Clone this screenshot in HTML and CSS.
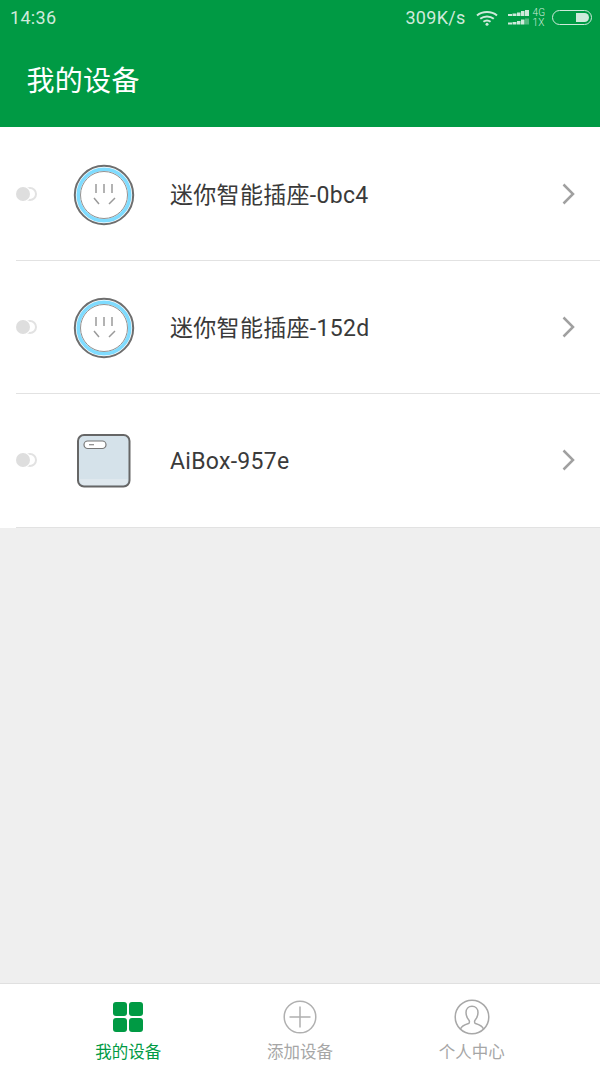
FILE: index.html
```html
<!DOCTYPE html>
<html lang="zh">
<head>
<meta charset="utf-8">
<title>我的设备</title>
<link rel="stylesheet" href="styles.css">
</head>
<body>
<div class="app">
  <header class="top">
    <div class="status">
      <span class="time">14:36</span>
      <div class="status-right">
        <span class="speed">309K/s</span>
        <svg class="wifi" width="22" height="16" viewBox="0 0 22 16" fill="none" stroke="#cfeadb" stroke-width="2"><path d="M1 5.500C6.500.8 15.500.8 21 5.500"/><path d="M4.200 8.800C8 5.600 14 5.600 17.800 8.800"/><path d="M7.400 11.800C9.500 10.200 12.500 10.200 14.600 11.800"/><circle cx="11" cy="14.200" r="1.500" fill="#cfeadb" stroke="none"/></svg>
        <svg class="signal" width="22" height="15" viewBox="0 0 22 15" fill="#cfeadb"><rect x="0" y="4" width="4" height="2"/><rect x="4.500" y="3.500" width="4" height="2.500"/><rect x="9" y="2.500" width="3.500" height="3.500"/><rect x="13" y="1" width="3.500" height="5"/><rect x="17" y="0" width="4" height="6"/><rect x="0" y="12.500" width="4" height="2"/><rect x="4.500" y="12" width="4" height="2.500"/><rect x="9" y="11" width="3.500" height="3.500"/><rect x="13" y="9.500" width="3.500" height="5"/><rect x="17" y="8.500" width="4" height="6" opacity=".4"/></svg>
        <span class="net"><span>4G</span><span>1X</span></span>
        <span class="battery"><span class="battery-fill"></span></span>
      </div>
    </div>
    <h1 class="title">我的设备</h1>
  </header>

  <main class="list">
    <div class="row">
      <span class="dots"><i class="dot-back"></i><i class="dot-front"></i></span>
      <svg class="device" width="62" height="62" viewBox="0 0 62 62" fill="none">
        <circle cx="31" cy="31" r="29.200" stroke="#6e6e6e" stroke-width="2"/>
        <circle cx="31" cy="31" r="25.800" stroke="#7fdcff" stroke-width="3.500"/>
        <circle cx="31" cy="31" r="23.500" fill="#fff" stroke="#929292" stroke-width="1"/>
        <path d="M23 20v9M31 20v9M39 20v9M21 34l5 6M42 34l-6 6" stroke="#9a9a9a" stroke-width="1.500"/>
      </svg>
      <span class="name">迷你智能插座-0bc4</span>
      <svg class="chevron" width="16" height="22" viewBox="0 0 16 22" fill="none" stroke="#a0a0a0" stroke-width="2.500"><path d="M2.500 1.500 12 11l-9.500 9.500"/></svg>
    </div>
    <div class="row">
      <span class="dots"><i class="dot-back"></i><i class="dot-front"></i></span>
      <svg class="device" width="62" height="62" viewBox="0 0 62 62" fill="none">
        <circle cx="31" cy="31" r="29.200" stroke="#6e6e6e" stroke-width="2"/>
        <circle cx="31" cy="31" r="25.800" stroke="#7fdcff" stroke-width="3.500"/>
        <circle cx="31" cy="31" r="23.500" fill="#fff" stroke="#929292" stroke-width="1"/>
        <path d="M23 20v9M31 20v9M39 20v9M21 34l5 6M42 34l-6 6" stroke="#9a9a9a" stroke-width="1.500"/>
      </svg>
      <span class="name">迷你智能插座-152d</span>
      <svg class="chevron" width="16" height="22" viewBox="0 0 16 22" fill="none" stroke="#a0a0a0" stroke-width="2.500"><path d="M2.500 1.500 12 11l-9.500 9.500"/></svg>
    </div>
    <div class="row">
      <span class="dots"><i class="dot-back"></i><i class="dot-front"></i></span>
      <svg class="device" width="62" height="56" viewBox="0 0 62 56" fill="none">
        <rect x="5" y="2" width="51.500" height="51.500" rx="6" fill="#d5e2ea" stroke="#666" stroke-width="2"/>
        <path d="M7 46h47.500v1.500a4.500 4.500 0 0 1-4.500 4.500H11.500a4.500 4.500 0 0 1-4.500-4.500z" fill="#dfe8ee"/>
        <rect x="11" y="8" width="22" height="7.500" rx="3.700" fill="#fff" stroke="#777" stroke-width="1.200"/>
        <path d="M16 11.700h5" stroke="#888" stroke-width="1.200"/>
      </svg>
      <span class="name">AiBox-957e</span>
      <svg class="chevron" width="16" height="22" viewBox="0 0 16 22" fill="none" stroke="#a0a0a0" stroke-width="2.500"><path d="M2.500 1.500 12 11l-9.500 9.500"/></svg>
    </div>
  </main>

  <div class="empty"></div>

  <nav class="tabs">
    <div class="tab tab-active">
      <svg width="32" height="36" viewBox="0 -2 32 36" fill="#009a44"><rect x="1" y="1" width="14" height="14" rx="3"/><rect x="17" y="1" width="14" height="14" rx="3"/><rect x="1" y="17" width="14" height="14" rx="3"/><rect x="17" y="17" width="14" height="14" rx="3"/></svg>
      <span>我的设备</span>
    </div>
    <div class="tab">
      <svg width="34" height="36" viewBox="0 -1 34 36" fill="none" stroke="#b0b0b0" stroke-width="1.500"><circle cx="17" cy="17" r="15.800"/><path d="M17 6.500v21M6.500 17h21"/></svg>
      <span>添加设备</span>
    </div>
    <div class="tab">
      <svg width="36" height="36" viewBox="0 0 36 36" fill="none" stroke="#a8a8a8" stroke-width="1.500"><circle cx="18" cy="18" r="16.800"/><path d="M6.500 30c1-3 4.500-4.500 8-5.500 1.200-.5 1.200-2.500.3-3.500-1.800-2-2.800-4.500-2.800-7.500 0-3.700 2.500-6.300 6-6.300s6 2.600 6 6.300c0 3-1 5.500-2.800 7.500-.9 1-.9 3 .3 3.500 3.500 1 7 2.500 8 5.500"/></svg>
      <span>个人中心</span>
    </div>
  </nav>
</div>
</body>
</html>
```
FILE: styles.css
```css
* { box-sizing: border-box; }
html, body { margin: 0; padding: 0; }
body {
  width: 600px;
  height: 1067px;
  overflow: hidden;
  font-family: Roboto, "Noto Sans CJK SC", sans-serif;
  background: #efefef;
}
.app { display: flex; flex-direction: column; height: 1067px; }

.top { background: #009a44; height: 127px; flex: none; }
.status {
  height: 35px;
  padding: 0 8px 0 10px;
  display: flex;
  align-items: center;
  justify-content: space-between;
  color: #cfeadb;
}
.time { font-size: 18px; letter-spacing: .3px; }
.status-right { display: flex; align-items: center; }
.speed { font-size: 18px; letter-spacing: .3px; margin-right: 10px; }
.wifi { margin-right: 10px; }
.signal { margin-right: 3px; }
.net {
  display: flex;
  flex-direction: column;
  font-size: 10px;
  font-weight: 300;
  line-height: 10px;
  margin-right: 7px;
}
.battery {
  width: 40px;
  height: 15px;
  border: 1.500px solid #cfeadb;
  border-radius: 8px;
  padding: 2px;
  display: flex;
  justify-content: flex-end;
}
.battery-fill { width: 13px; background: #cfeadb; border-radius: 0 5px 5px 0; }

.title {
  margin: 0;
  padding: 28px 0 0 26.500px;
  font-size: 28px;
  letter-spacing: .3px;
  font-weight: 400;
  line-height: 37px;
  color: #fff;
}

.list { background: #fff; flex: none; padding-top: 1px; }
.row {
  height: 133.200px;
  margin-left: 16px;
  display: flex;
  align-items: center;
  border-bottom: 1px solid #e2e2e2;
}
.dots { position: relative; width: 22px; height: 14px; flex: none; }
.dot-back {
  position: absolute;
  left: 7px;
  top: 0;
  width: 14px;
  height: 14px;
  border-radius: 50%;
  border: 2px solid #e2e2e2;
}
.dot-front {
  position: absolute;
  left: 0;
  top: 0;
  width: 14px;
  height: 14px;
  border-radius: 50%;
  background: #dedede;
  box-shadow: 0 0 0 1px #fff;
}
.device { flex: none; margin-left: 35px; margin-top: 2px; }
.name {
  margin-left: 35px;
  padding-top: 3px;
  font-size: 23px;
  letter-spacing: .3px;
  line-height: 30px;
  color: #3a3a3a;
  flex: 1;
}
.chevron { flex: none; margin-right: 23px; }

.empty { flex: 1; }

.tabs {
  height: 84px;
  flex: none;
  background: #fff;
  border-top: 1px solid #e0e0e0;
  padding: 15px 42.500px 0;
  display: grid;
  grid-template-columns: repeat(3, 1fr);
}
.tab {
  display: flex;
  flex-direction: column;
  align-items: center;
  gap: 7px;
  font-size: 16.500px;
  line-height: 22px;
  color: #a6a6a6;
}
.tab-active { color: #009a44; }
```
